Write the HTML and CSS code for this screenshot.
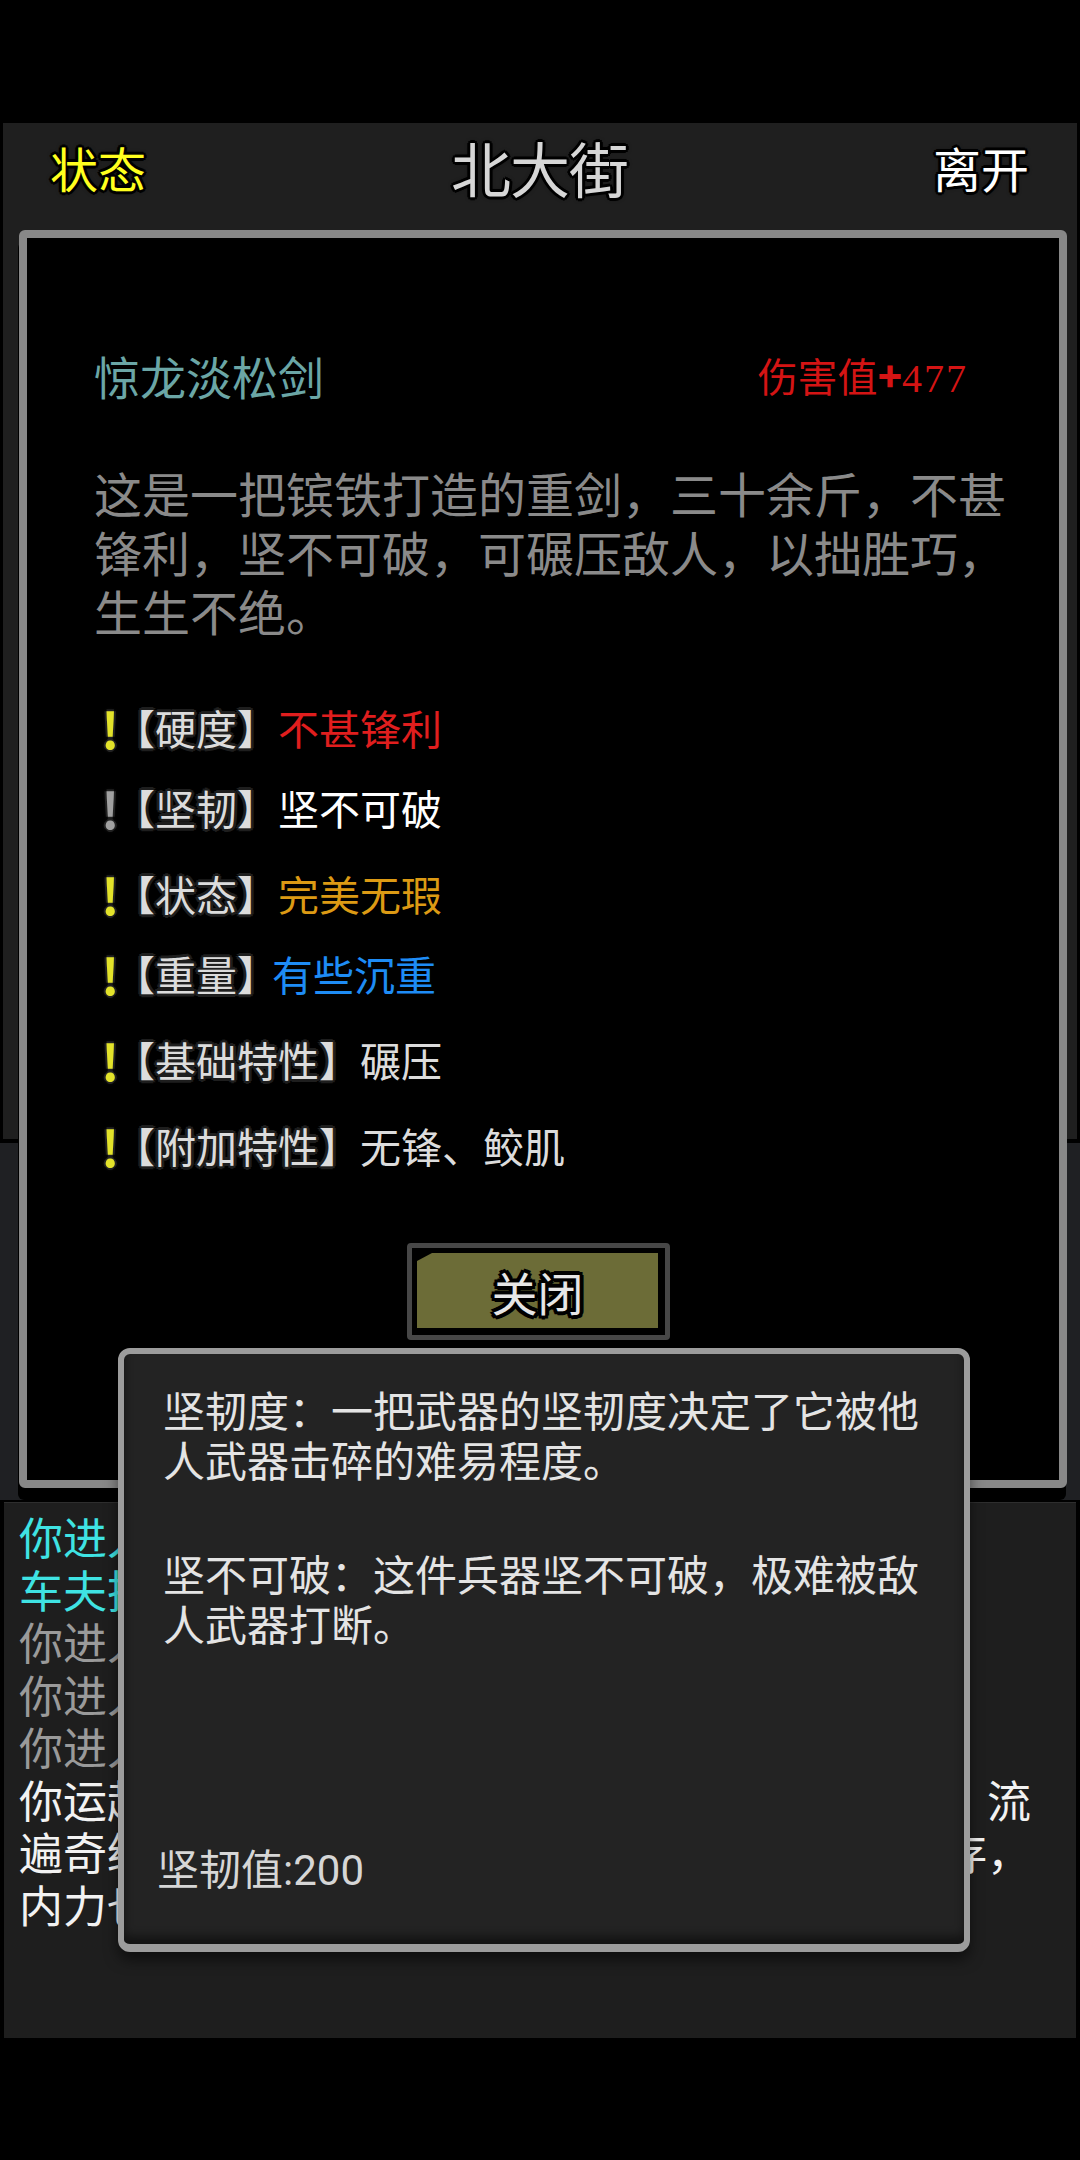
FILE: index.html
```html
<!DOCTYPE html>
<html lang="zh-CN">
  <head>
    <meta charset="UTF-8" />
    <meta name="viewport" content="width=device-width, initial-scale=1.0" />
    <link rel="stylesheet" href="styles.css">
    <title>北大街</title>
  </head>
  <body>
    <div class="screen">
      <div class="stage">
        <header class="topbar">
          <span class="topbar__status">状态</span>
          <span class="topbar__title">北大街</span>
          <span class="topbar__leave">离开</span>
        </header>
      </div>
      <div class="actions"></div>
      <div class="log">
        <p class="log__line log__line--sys">你进入了北大街。</p>
        <p class="log__line log__line--sys">车夫把你拉到了北大街，收了你十文钱。</p>
        <p class="log__line log__line--old">你进入了北大街。</p>
        <p class="log__line log__line--old">你进入了南大街。</p>
        <p class="log__line log__line--old">你进入了中央广场。</p>
        <p class="log__line">你运起内功，一股暖流自丹田升起，沿经脉而行，流遍奇经八脉，周身说不出的舒泰，真气在体内留存，内力也随之增长了。</p>
      </div>

      <div class="item-modal">
        <div class="item-modal__head">
          <span class="item-modal__name">惊龙淡松剑</span>
          <span class="item-modal__dmg">伤害值<b>+</b><span class="item-modal__num">477</span></span>
        </div>
        <p class="item-modal__desc">这是一把镔铁打造的重剑，三十余斤，不甚锋利，坚不可破，可碾压敌人，以拙胜巧，生生不绝。</p>
        <ul class="attrs">
          <li class="attr">
            <span class="attr__mark">!</span><span class="attr__label">【硬度】</span><span class="attr__value attr__value--red">不甚锋利</span>
          </li>
          <li class="attr">
            <span class="attr__mark attr__mark--off">!</span><span class="attr__label">【坚韧】</span><span class="attr__value attr__value--white">坚不可破</span>
          </li>
          <li class="attr attr--spaced">
            <span class="attr__mark">!</span><span class="attr__label">【状态】</span><span class="attr__value attr__value--gold">完美无瑕</span>
          </li>
          <li class="attr">
            <span class="attr__mark">!</span><span class="attr__label">【重量】</span><span class="attr__value attr__value--blue">有些沉重</span>
          </li>
          <li class="attr attr--spaced">
            <span class="attr__mark">!</span><span class="attr__label">【基础特性】</span><span class="attr__value">碾压</span>
          </li>
          <li class="attr attr--spaced">
            <span class="attr__mark">!</span><span class="attr__label">【附加特性】</span><span class="attr__value">无锋、鲛肌</span>
          </li>
        </ul>
        <div class="item-modal__close"><span>关闭</span></div>
      </div>

      <div class="tip">
        <p class="tip__text">坚韧度：一把武器的坚韧度决定了它被他人武器击碎的难易程度。</p>
        <p class="tip__text tip__text--second">坚不可破：这件兵器坚不可破，极难被敌人武器打断。</p>
        <p class="tip__stat">坚韧值:200</p>
      </div>
    </div>
  </body>
</html>
```

FILE: styles.css
```css
* {
  margin: 0;
  padding: 0;
  box-sizing: border-box;
}

body {
  background: #000;
  font-family: "Noto Sans CJK SC", "Noto Sans", sans-serif;
  color: #ddd;
}

ul {
  list-style: none;
}

.screen {
  position: relative;
  width: 1080px;
  height: 2160px;
  padding-top: 123px;
  overflow: hidden;
}

/* main scene panel */
.stage {
  margin: 0 3px;
  height: 1016px;
  background: #1f1f1f;
}

.topbar {
  height: 107px;
  display: grid;
  grid-template-columns: 1fr auto 1fr;
  align-items: center;
  padding: 0 48px 22px 47px;
  text-shadow: -3px 0 #000, 3px 0 #000, 0 -3px #000, 0 3px #000,
    -2px -2px #000, 2px -2px #000, -2px 2px #000, 2px 2px #000, 0 0 5px #000;
}
.topbar__status {
  font-size: 48px;
  color: #ffff1e;
}
.topbar__title {
  font-size: 60px;
  color: #d6d6d6;
  letter-spacing: -1px;
}
.topbar__leave {
  font-size: 48px;
  color: #fff;
  justify-self: end;
}

.actions {
  margin-top: 4px;
  height: 357px;
  background: #1f2023;
}

.log {
  margin: 2px 4px 0;
  height: 536px;
  background: #1e1e1e;
  border-top: 1px solid #2e2e2e;
  padding: 7px 37px 0 15px;
  font-size: 44px;
  line-height: 52.5px;
  color: #f2f2f2;
}
.log__line--sys {
  color: #3fe3e3;
}
.log__line--old {
  color: #9a9a9a;
}

/* item detail dialog */
.item-modal {
  position: absolute;
  top: 230px;
  left: 19px;
  width: 1048px;
  height: 1258px;
  border: 8px solid #888;
  border-radius: 6px;
  background: #000;
  box-shadow: -1px 12px 0 #000;
  padding: 109px 0 0 67px;
}

.item-modal__head {
  display: flex;
  justify-content: space-between;
  align-items: center;
  height: 56px;
  padding-right: 91px;
}
.item-modal__name {
  font-size: 46px;
  color: #6ba6a6;
}
.item-modal__dmg {
  font-size: 40px;
  color: #d41414;
}
.item-modal__dmg b {
  font-weight: 900;
}
.item-modal__num {
  font-family: "Liberation Serif", serif;
  letter-spacing: 2px;
}

.item-modal__desc {
  margin-top: 60px;
  width: 920px;
  font-size: 48px;
  line-height: 59px;
  color: #8a8a8a;
}

.attrs {
  margin-top: 47px;
}
.attr {
  display: flex;
  align-items: center;
  height: 80px;
  padding-left: 7px;
  font-size: 41px;
  color: #dedede;
}
.attr--spaced {
  margin-top: 6px;
}
.attr__mark {
  width: 13px;
  font-size: 50px;
  font-weight: 700;
  color: #e2e22a;
  text-shadow: -2px 0 #222, 2px 0 #222, 0 -2px #222, 0 2px #222, 0 0 4px #222;
}
.attr__mark--off {
  color: #a0a0a0;
}
.attr__label {
  color: #dcdcdc;
  text-shadow: -3px 0 #1e1e1e, 3px 0 #1e1e1e, 0 -3px #1e1e1e, 0 3px #1e1e1e,
    -2px -2px #1e1e1e, 2px 2px #1e1e1e, 2px -2px #1e1e1e, -2px 2px #1e1e1e;
}
.attr__value {
  color: #dcdcdc;
}
.attr__value--red {
  color: #e01e1e;
}
.attr__value--white {
  color: #fff;
}
.attr__value--gold {
  color: #dc9a14;
}
.attr__value--blue {
  color: #1e8cf5;
  margin-left: -6px;
}

.item-modal__close {
  margin: 58px 0 0 313px;
  width: 263px;
  height: 97px;
  border: 5px solid #474747;
  border-radius: 4px;
  background: #000;
  padding: 5px 7px 7px 5px;
}
.item-modal__close span {
  display: flex;
  align-items: center;
  justify-content: center;
  height: 100%;
  background: #6c6c37;
  clip-path: polygon(15px 0, 100% 0, 100% 100%, 0 100%, 0 8px);
  font-size: 46px;
  color: #e6e6e6;
  text-shadow: -4px 0 #000, 4px 0 #000, 0 -4px #000, 0 4px #000,
    -3px -3px #000, 3px -3px #000, -3px 3px #000, 3px 3px #000;
}

/* hover tooltip */
.tip {
  position: absolute;
  top: 1348px;
  left: 118px;
  width: 852px;
  height: 604px;
  display: flex;
  flex-direction: column;
  border: 6px solid #9c9c9c;
  border-bottom-width: 8px;
  border-radius: 12px;
  background: #232323;
  box-shadow: inset 0 -8px 10px rgba(0, 0, 0, 0.45), 0 8px 14px rgba(0, 0, 0, 0.5);
  padding: 30px 40px 48px 39px;
  font-size: 42px;
  line-height: 50px;
  color: #e4e4e4;
}
.tip__text--second {
  margin-top: 64px;
}
.tip__stat {
  margin-top: auto;
  margin-left: -6px;
  font-family: Roboto, "Noto Sans CJK SC", sans-serif;
  font-size: 42px;
  color: #d6d6d6;
}
```
